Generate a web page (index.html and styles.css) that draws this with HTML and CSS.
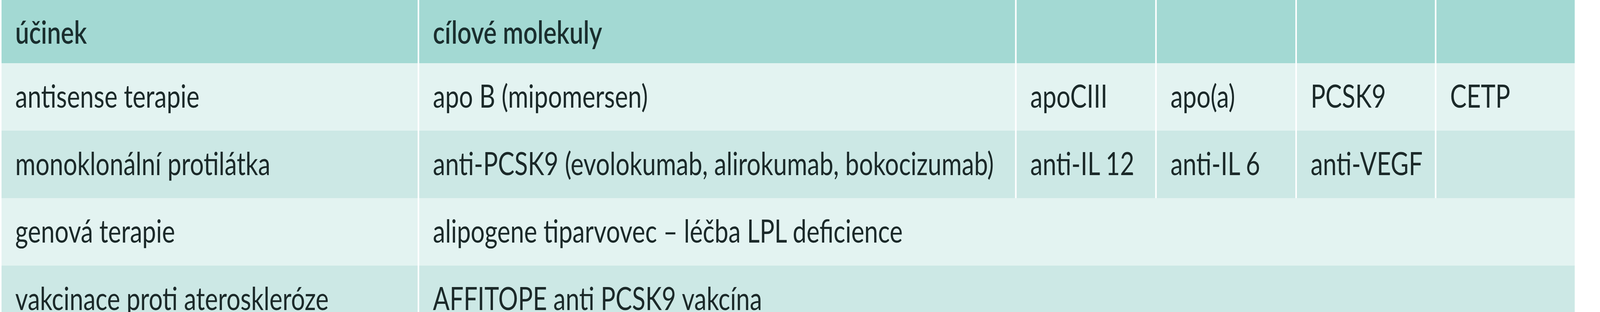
FILE: index.html
```html
<!DOCTYPE html>
<html lang="cs">
<head>
<meta charset="utf-8">
<title>Tabulka</title>
<link rel="stylesheet" href="styles.css">
</head>
<body>
<div class="sheet">
<table class="grid">
  <colgroup>
    <col class="c-effect">
    <col class="c-target">
    <col class="c-a">
    <col class="c-a">
    <col class="c-b">
    <col class="c-c">
  </colgroup>
  <thead>
    <tr class="head">
      <th>účinek</th>
      <th>cílové molekuly</th>
      <th></th>
      <th></th>
      <th></th>
      <th></th>
    </tr>
  </thead>
  <tbody>
    <tr class="light">
      <td>antisense terapie</td>
      <td>apo B (mipomersen)</td>
      <td>apoCIII</td>
      <td>apo(a)</td>
      <td>PCSK9</td>
      <td>CETP</td>
    </tr>
    <tr class="dark">
      <td>monoklonální protilátka</td>
      <td>anti-PCSK9 (evolokumab, alirokumab, bokocizumab)</td>
      <td>anti-IL 12</td>
      <td>anti-IL 6</td>
      <td>anti-VEGF</td>
      <td></td>
    </tr>
    <tr class="light">
      <td>genová terapie</td>
      <td colspan="5">alipogene tiparvovec – léčba LPL deficience</td>
    </tr>
    <tr class="dark">
      <td>vakcinace proti ateroskleróze</td>
      <td colspan="5">AFFITOPE anti PCSK9 vakcína</td>
    </tr>
  </tbody>
</table>
</div>
</body>
</html>
```

FILE: styles.css
```css
html, body {
  margin: 0;
  padding: 0;
  background: #ffffff;
}

.sheet {
  overflow: hidden;
}

/* The table is laid out at the source proportions and then
   narrowed to fit the 4096px-wide capture. */
.grid {
  table-layout: fixed;
  border-collapse: separate;
  border-spacing: 0;
  width: 5169px;
  font-family: Lato, "Liberation Sans", sans-serif;
  font-size: 81px;
  line-height: 1;
  color: #1b2929;
  transform: scaleX(0.7799);
  transform-origin: 0 0;
}

.c-effect { width: 1371px; }
.c-target { width: 1961px; }
.c-a { width: 460px; }
.c-b { width: 458px; }
.c-c { width: 459px; }

.grid th,
.grid td {
  border-left: 5px solid #ffffff;
  padding: 42px 8px 0 45px;
  vertical-align: top;
  text-align: left;
  white-space: nowrap;
  overflow: hidden;
}

.grid th {
  font-weight: 600;
  color: #1a2e2e;
  padding-top: 40px;
}

.head {
  height: 162px;
  background: #a3d9d3;
}

.light {
  height: 173px;
  background: #e3f3f1;
}

.dark {
  height: 173px;
  background: #cce8e5;
}
```
